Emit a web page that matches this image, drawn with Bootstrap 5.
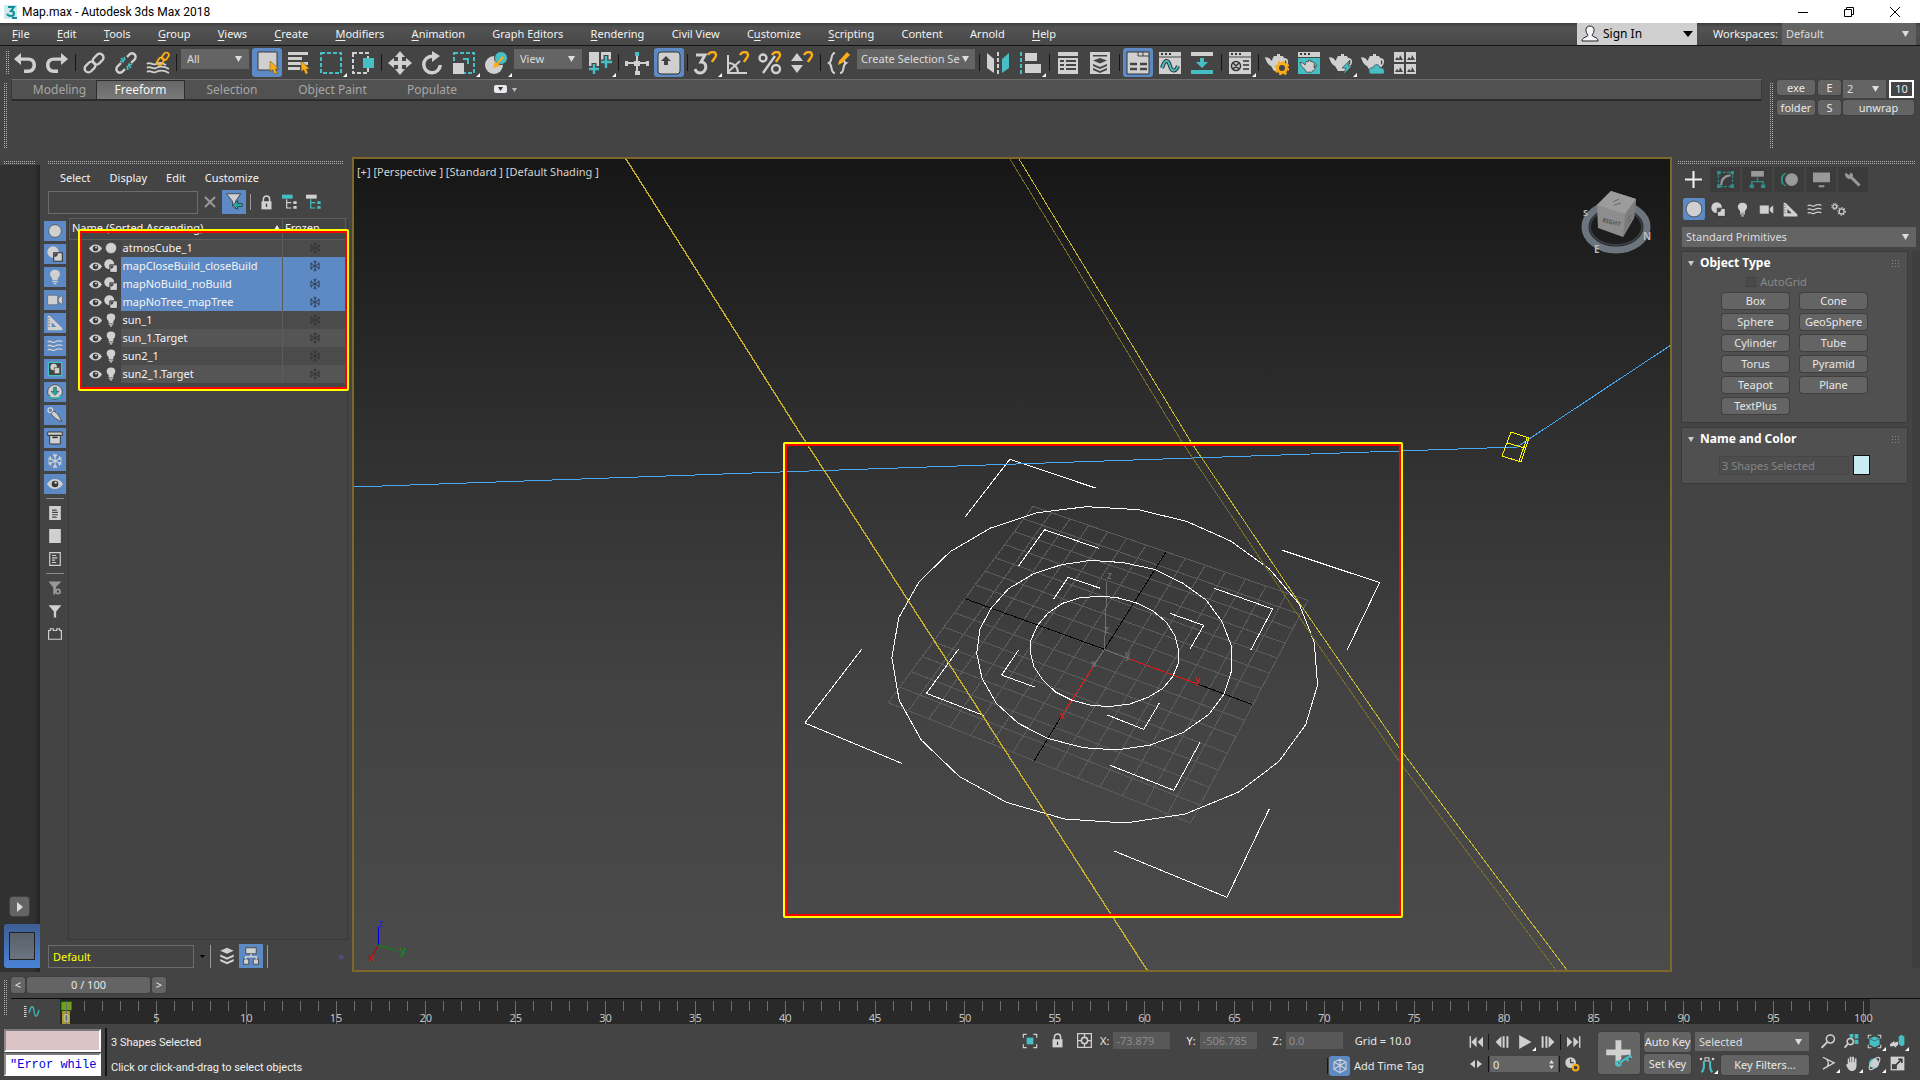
<!DOCTYPE html>
<html lang="en">
<head>
<meta charset="utf-8">
<meta name="viewport" content="width=device-width, initial-scale=1">
<title>Map.max - Autodesk 3ds Max 2018</title>
<link rel="stylesheet" href="https://cdn.jsdelivr.net/npm/bootstrap@5.3.0/dist/css/bootstrap.min.css">
<style>
:root{--bg:#444;--ctl:#646464;--sel:#5d8ac4;--ico:#d0d0d0;--teal:#46bfc4;--gold:#fbae17;
--caret:url("data:image/svg+xml,%3Csvg xmlns='http://www.w3.org/2000/svg' width='7' height='6'%3E%3Cpath d='M0 0h7L3.5 6z' fill='%23ddd'/%3E%3C/svg%3E")}
body{background:var(--bg);color:#e8e8e8;font-family:"Noto Sans","Open Sans",sans-serif;font-size:11px;line-height:14px;height:100vh;overflow:hidden}
button,select,input{font:inherit;color:inherit;border:0;border-radius:0;padding:0;margin:0;outline:0}
button{background:none;display:inline-flex;align-items:center;justify-content:center}
a{color:inherit;text-decoration:none}
svg{display:block}
.ic{width:24px;height:24px;fill:var(--ico);stroke:none;color:var(--ico)}
.ic-12{width:12px;height:12px}.ic-13{width:13px;height:13px}.ic-14{width:14px;height:14px}.ic-15{width:15px;height:15px}
.ic-16{width:16px;height:16px}.ic-17{width:17px;height:17px}.ic-18{width:18px;height:18px}.ic-20{width:20px;height:20px}.ic-28{width:28px;height:28px}
.titlebar{height:23px;background:#fff;color:#000;font-family:Roboto,"Open Sans",sans-serif;font-size:12px}
.winbtn{width:46px;height:23px}
.winset{margin-right:2px}
.menubar{height:23px;background:linear-gradient(#3e3e3e,#525252 20%,#484848);border-bottom:1px solid #141414;color:#f2f2f2}
.menus{width:1068px}
.menus a{padding:0 12px;white-space:nowrap}
.menus u{text-underline-offset:2px}
.signin{width:120px;height:22px;background:#cfcfcf;color:#000;font-size:12px;margin-right:16px}
.pick{appearance:none;background:var(--ctl) var(--caret) no-repeat right 7px center;color:#ddd;text-overflow:clip;white-space:nowrap;overflow:hidden}
.pick.ws{width:134px;height:22px;padding-left:4px}
.toolbar-main{height:33px;padding-left:2px}
.grip-v,.grip-h{background:repeating-linear-gradient(0deg,var(--bg) 0 1px,transparent 1px 2px),repeating-linear-gradient(90deg,#b0b0b0 0 1px,transparent 1px 2px)}
.grip-v{width:3px}
.grip-h{height:4px}
.tool{width:32px;height:31px;position:relative}
.tool.on>span{width:30px;height:29px;background:var(--sel);border-radius:3px;display:flex;align-items:center;justify-content:center}
.fly::after{content:"";position:absolute;right:0;bottom:1px;border:2px solid transparent;border-right-color:#fff;border-bottom-color:#fff}
.tsep{width:5px;display:flex;justify-content:center}
.tsep::before{content:"";width:1px;height:17px;background:#161616}
.tsep.wide{width:6px}
.toolbar-main .pick{width:68px;height:20px;margin:0 2px 8px;padding:0 6px}
.toolbar-main .pick.named{width:118px;padding-left:4px;background-position:right 6px center}
.ribbon{height:78px}
.ribtabs{height:22px;background:#515151;border:1px solid #3a3a3a;border-top-color:#6c6c6c;border-bottom:2px solid #2c2c2c;color:#a6a6a6;font-size:12px}
.ribtabs button{height:19px}
.rt1{width:84px;padding-left:11px}.rt2{width:89px;background:linear-gradient(#666,#7a7a7a);color:#f4f4f4;border:1px solid #2c2c2c;border-bottom:0}
.rt3{width:94px}.rt4{width:107px}.rt5{width:92px}
.flat{background:var(--ctl);border-radius:3px;color:#e8e8e8;box-shadow:0 0 0 1px #3f3f3f}
.quick{width:158px}
.quick .flat{height:15px}
.q-a .flat{width:38px}.q-b .flat{width:23px}
.q-a{margin-right:3px}.q-b{margin-right:2px}
.q-a,.q-b{row-gap:5px;padding-top:1px}.q-c{row-gap:2px;padding-right:6px;padding-top:1px}
.q-c .pick{width:43px;height:18px}
.q-ten{width:25px;height:18px}
.leftstrip{width:40px}
.leftdark{background:linear-gradient(90deg,#313131 85%,#232323)}
.playbtn{width:19px;height:19px;margin-left:10px}
.thumbtab{height:44px;background:linear-gradient(#3d5e94,#4a84d8);border-radius:3px 0 0 3px}
.thumbtab i{width:26px;height:28px;background:linear-gradient(#596069,#6a7480);border:1px solid #222}
.explorer{width:312px}
.exmenu{height:25px;color:#f4f4f4;column-gap:19px;padding-left:20px}
.field{background:#444;border:1px solid #6c6c6c;height:23px}
.f-find{width:150px}
.f-layer{width:146px;color:#ff0;margin-left:8px}
.sq{width:24px;height:24px}
.lit-bg{background:var(--sel)}
.drop{width:16px;height:23px}
.togcol{width:28px;padding:3px 0 0 4px;row-gap:3px}
.togcol button{width:22px;height:20px}
.togcol .lit{background:var(--sel)}
.togcol hr{width:18px;margin:1px 2px;border:0;border-top:1px solid #8a8a8a;opacity:1;height:0}
.listbox{border:1px solid #393939;border-top-color:#5c5c5c;width:280px;position:relative}
.tree{table-layout:fixed;width:277px;border-collapse:collapse;color:#f4f4f4}
.c-ico{width:51px}.c-name{width:162px}
.tree th{height:20px;padding:0 2px 2px;font-weight:400;border:1px solid #5c5c5c;border-top:0;overflow:hidden;white-space:nowrap}
.tree td{height:18px;padding:0 0 0 2px;white-space:nowrap}
.tree td+td{background:#4d4d4d}
.tree tr:nth-child(odd) td+td{background:#4b4b4b}
.tree tr:nth-child(even) td+td{background:#555}
.tree tr.picked td+td{background:var(--sel)}
.tree td:last-child{border-left:1px solid #5c5c5c}
.frz{color:#333}.picked .frz{color:#2c3c55}
.pair{gap:2px;padding-right:3px}
.callout{position:absolute;left:9px;top:10px;width:271px;height:162px;border:2px solid #ff0;border-radius:2px;box-shadow:inset 0 0 0 2px #f00;pointer-events:none}
.tallbar{width:1px;height:23px;background:#999}
.more{color:#5656a8}
.vp{border:2px solid #7d672a;background:linear-gradient(#161616,#2e2e2e 32%,#424242 65%,#4b4b4b)}
.vplabel{position:absolute;left:3px;top:6px;color:#d4d4d4}
.cmd{width:248px;padding-left:6px}
.cmdtabs{height:28px;padding-top:2px}
.cmdtabs button{width:30px;height:25px;background:#3b3b3b;margin-right:2px}
.cmdtabs .cur{background:var(--bg)}
.cats{padding:4px 0 6px 4px}
.cats button{width:24px;height:24px}
.cats .lit>span{width:22px;height:22px;background:var(--sel);border-radius:2px}
.p-cat{height:20px}
.rollout{background:#505050;border:1px solid #3a3a3a;border-radius:2px;margin-right:4px;margin-left:3px}
.rollout h2{font-size:12px;line-height:16px;font-weight:700;color:#fff;margin:0}
.rollhead{padding:3px 8px 0 6px;column-gap:6px}
.autogrid{color:#8a8a8a;padding-right:36px}
.autogrid input{appearance:none;width:10px;height:10px;border:1px solid #424242;background:#4a4a4a}
.objname{width:130px;height:19px;background:#4d4d4d;border:1px solid #464646;color:#858585;padding-left:2px}
.swatch{width:17px;height:20px;background:#c8ecf2;border:1px solid #111}
.prims{grid-template-columns:67px 67px;gap:5px 11px;display:grid;justify-content:center}
.prims button{height:16px}
.scrollrail{width:8px;background:#3e3e3e}
.trackwrap{height:52px}
.slider{height:26px;gap:2px}
.slider .flat{width:14px;height:16px}
.slider .flat.s-mid{width:123px}
.trackbar{height:26px;border-top:1px solid #0c0c0c}
.curvebtn{width:49px;height:25px;padding-right:6px}
.track{background:#292929;margin-right:50px;padding:2px 6px 0;height:25px}
.tk{width:1px;height:10px;background:#6d6d6d;display:flex;justify-content:center;align-items:flex-end}
.tk.maj{height:23px}
.tk b{font-weight:400;font-size:11px;line-height:13px;color:#c4c4c4;flex:none}
.head{position:absolute;left:0;top:2px;width:12px}
.status{height:56px}
.script{width:97px;row-gap:1px;padding-top:5px}
.script input{width:97px;height:23px;background:#fff;border:2px solid #fff;border-top-color:#7a7a7a;border-left-color:#8a8a8a;font:400 12px "Liberation Mono",monospace;color:#0000d8;padding-left:4px}
.script .rec{background:#dcc3c5}
.bar2{width:2px;background:#161616}
.prompt{font-family:Roboto,"Noto Sans",sans-serif;padding-top:6px;color:#f0f0f0}
.coords{width:442px}
.tagrow{padding-left:304px}
.tagbtn{width:21px;height:20px;border-radius:3px}
.coord{width:57px;height:17px;background:#585858;color:#8c8c8c;padding-left:3px}
.play{width:134px;row-gap:2px}
.pb{width:23px;height:20px;position:relative}
.frame{width:68px;height:16px;background:var(--ctl);padding-left:3px}
.vs{width:1px;height:16px;background:#161616;margin:0 1px}
.vs.light{background:#999}
.bigkey{width:42px;height:42px}
.keys{row-gap:2px}
.keys .flat{width:47px;height:20px}
.keyset{width:114px;row-gap:4px}
.keyset .pick{height:19px}
.keyset .flat{width:88px;height:20px}
.navgrid{display:grid;grid-template-columns:repeat(4,23px);padding-top:6px;margin-right:11px}
.navgrid button{height:22px;position:relative}
</style>
<script src="https://cdn.jsdelivr.net/npm/bootstrap@5.3.0/dist/js/bootstrap.bundle.min.js"></script>
</head>
<body class="d-flex flex-column">
<svg width="0" height="0" class="position-absolute" aria-hidden="true">
<defs>
<symbol id="undo" viewBox="0 0 24 24"><path d="M1 8l7-6v4.500h7c5 0 8 3 8 7.500s-3 8-8 8h-4v-3.500h4c3 0 4.500-2 4.500-4.500S18 9.800 15 9.800H8V14z"/></symbol>
<symbol id="link" viewBox="0 0 24 24"><g fill="none" stroke="currentColor" stroke-width="2.4"><rect x="-3.6" y="-6" width="7.6" height="12" rx="3.8" transform="translate(16 8) rotate(45)"/><rect x="-3.8" y="-6" width="7.6" height="12" rx="3.8" transform="translate(8 16) rotate(45)"/></g></symbol>
<symbol id="unlink" viewBox="0 0 24 24"><g fill="none" stroke="currentColor" stroke-width="2.4"><path d="M13 6l3-3c3-2 7 1 5 5l-4 4M11 18l-3 3c-3 2-7-1-5-5l4-4"/></g><path d="M7 7l3 3M17 17l-3-3M6 10l4 1M14 13l4 1M10 6l1 3M13 15l1 4" stroke="#46bfc4" stroke-width="1.7"/></symbol>
<symbol id="bind" viewBox="0 0 24 24"><path d="M1 13c3-3 5 2 9 0s6-1 10 1M1 17c3-3 5 2 9 0s8-2 13 1M1 21c3-3 5 2 9 0s8-2 13 1" fill="none" stroke="currentColor" stroke-width="1.8"/><g fill="none" stroke="#fbae17" stroke-width="1.8"><rect x="17" y="1" width="5" height="8" rx="2.5" transform="rotate(35 19 5)"/><rect x="12" y="6" width="5" height="8" rx="2.5" transform="rotate(35 14 10)"/></g></symbol>
<symbol id="arrow" viewBox="0 0 12 16"><path d="M1 0v12l3-2 2 5 3-1-2-5h4z" fill="#fbae17" stroke="#5c4a20" stroke-width=".6"/></symbol>
<symbol id="selobj" viewBox="0 0 24 24"><path d="M3 1h19v18H3z" stroke="#3a3a3a"/><use href="#arrow" x="14" y="10" width="11" height="14"/></symbol>
<symbol id="selname" viewBox="0 0 24 24"><path d="M1 1h20v3H1zM1 6h14v3H1zM1 11h20v3H1zM1 16h12v3H1z"/><use href="#arrow" x="13" y="10" width="11" height="14"/></symbol>
<symbol id="rectsel" viewBox="0 0 24 24"><rect x="2" y="2" width="20" height="20" fill="none" stroke="#46bfc4" stroke-width="2" stroke-dasharray="4 2"/></symbol>
<symbol id="winsel" viewBox="0 0 24 24"><rect x="2" y="2" width="15" height="20" fill="none" stroke="currentColor" stroke-width="2" stroke-dasharray="4 2"/><path d="M12 7h11v10H12z" fill="#46bfc4"/></symbol>
<symbol id="move" viewBox="0 0 24 24"><path d="M12 0l5 6h-3v4h4V7l6 5-6 5v-3h-4v4h3l-5 6-5-6h3v-4H6v3l-6-5 6-5v3h4V6H7z"/></symbol>
<symbol id="rotate" viewBox="0 0 24 24"><path d="M12 0l8 5-8 6V7a6.500 6.500 0 1 0 6.500 7h3.500A10 10 0 1 1 12 3.500z"/></symbol>
<symbol id="scale" viewBox="0 0 24 24"><rect x="2" y="2" width="20" height="20" fill="none" stroke="#46bfc4" stroke-width="2" stroke-dasharray="4 2"/><path d="M1 12h11v11H1z"/><path d="M11 7h6v6h-2V9h-4z" fill="#46bfc4"/></symbol>
<symbol id="place" viewBox="0 0 24 24"><circle cx="10" cy="14" r="9"/><circle cx="17" cy="7" r="6.500" fill="#46bfc4" stroke="#444"/><path d="M18 5l2 2-6 6 2 2-7 2 2-7 2 2z" fill="#fbae17"/></symbol>
<symbol id="pivot" viewBox="0 0 24 24"><path d="M1 1h10v14H1zM13 1h10v9H13z"/><path d="M6 12v12M1 18h10M18 4v14M13 11h11" stroke="#444" stroke-width="5"/><path d="M6 13v10M1 18h10M18 5v12M13 11h11" stroke="#46bfc4" stroke-width="2.4"/></symbol>
<symbol id="manip" viewBox="0 0 24 24"><path d="M12 5v18M1 12h22" stroke="currentColor" stroke-width="2"/><path d="M10 1h4v4h-4z" fill="#46bfc4"/><path d="M0 10h3v5H0zM21 10h3v5h-3zM10 20h5v4h-5zM9 10h6v5H9z"/></symbol>
<symbol id="kbd" viewBox="0 0 24 24"><rect x="1" y="1" width="22" height="22" rx="3" stroke="#333"/><path d="M9 5l5 5h-3v4H7v-4H4z" fill="#444"/></symbol>
<symbol id="magnet" viewBox="0 0 12 12"><path d="M2 4c2-4 8-4 8 0 0 3-3 4-4 7" fill="none" stroke="#fbae17" stroke-width="2.4"/></symbol>
<symbol id="snap3" viewBox="0 0 24 24"><path d="M2 4h9l-4 7c7 0 6 11-1 11-3 0-4-1-5-4" fill="none" stroke="currentColor" stroke-width="3"/><use href="#magnet" x="12" y="0" width="12" height="12"/></symbol>
<symbol id="asnap" viewBox="0 0 24 24"><path d="M2 4v18h19M2 12c6 0 10 4 10 10M2 21L14 10" fill="none" stroke="currentColor" stroke-width="2"/><use href="#magnet" x="12" y="0" width="12" height="12"/></symbol>
<symbol id="psnap" viewBox="0 0 24 24"><g fill="none" stroke="currentColor" stroke-width="2.4"><circle cx="5" cy="7" r="3.500"/><circle cx="18" cy="18" r="4"/><path d="M5 22L17 5"/></g><use href="#magnet" x="12" y="0" width="12" height="12"/></symbol>
<symbol id="ssnap" viewBox="0 0 24 24"><path d="M1 10l6-8 6 8zM1 14h12l-6 8z"/><use href="#magnet" x="12" y="0" width="12" height="12"/></symbol>
<symbol id="nset" viewBox="0 0 24 24"><path d="M8 2C3 2 6 10 2 12c4 2 1 10 6 10M13 22c5 0 2-8 6-10-3-1-2-3-2-5" fill="none" stroke="currentColor" stroke-width="2"/><path d="M11 14l1-4 8-9 3 3-8 8z" fill="#fbae17"/></symbol>
<symbol id="mirror" viewBox="0 0 24 24"><path d="M1 2l7 6v14l-7-5z"/><path d="M12 1v22" stroke="currentColor" stroke-width="2" stroke-dasharray="4 2"/><path d="M23 2l-7 6v14l7-5z" fill="#46bfc4"/></symbol>
<symbol id="align" viewBox="0 0 24 24"><path d="M3 1v22" stroke="#46bfc4" stroke-width="2" stroke-dasharray="4 2"/><path d="M7 2h12v8H7zM7 13h16v9H7z"/></symbol>
<symbol id="layers" viewBox="0 0 24 24"><path d="M2 1h20v22H2z"/><path d="M2 6h20M4 10h4M10 10h10M4 14h4M10 14h10M4 18h4M10 18h10" stroke="#444" stroke-width="2"/></symbol>
<symbol id="stackp" viewBox="0 0 24 24"><path d="M2 1h20v22H2z"/><path d="M5 4h14v1.500H5zM5 9.500L12 7l7 2.500-7 3zM5 13l7 3 7-3v2l-7 3-7-3zM5 17l7 3 7-3v2l-7 3-7-3z" fill="#444"/></symbol>
<symbol id="ribb" viewBox="0 0 24 24"><path d="M1 1h22v22H1z" stroke="#333"/><path d="M12 1v4h11M17 1v4" stroke="#444" fill="none"/><path d="M4 13h7M14 13h7M4 18h7M14 18h7" stroke="#444" stroke-width="2.6"/></symbol>
<symbol id="curve" viewBox="0 0 24 24"><path d="M1 1h22v22H1z"/><path d="M1 6h22" stroke="#444"/><path d="M3 3h2M7 3h2M11 3h2" stroke="#333" stroke-width="2"/><path d="M4 17c3-9 6-9 8-2s6 5 8 0" fill="none" stroke="#333" stroke-width="4"/><path d="M4 17c3-9 6-9 8-2s6 5 8 0" fill="none" stroke="#46bfc4" stroke-width="2"/></symbol>
<symbol id="schem" viewBox="0 0 24 24"><path d="M1 1h22v4H1z"/><path d="M1 19h22v4H1zM10 7h4v4h4l-6 6-6-6h4z" fill="#46bfc4"/></symbol>
<symbol id="mated" viewBox="0 0 24 24"><path d="M1 1h22v22H1z"/><path d="M1 6h22" stroke="#444"/><path d="M3 3h2M7 3h2M11 3h2" stroke="#333" stroke-width="2"/><circle cx="8" cy="15" r="4.500" fill="none" stroke="#333" stroke-width="1.500"/><path d="M5 12l6 6M11 12l-6 6M15 10h6M15 14h6M15 18h6" stroke="#333" stroke-width="1.500"/></symbol>
<symbol id="pot" viewBox="0 0 24 24"><path d="M9 5h3V3h3v2h3l1 2c6 0 5 7 0 10l-2 3H9L6 15C3 14 1 10 0 6l4 1 3 3c0-2 1-3 2-5zM20 9v5c2-2 2-4 0-5z"/></symbol>
<symbol id="rset" viewBox="0 0 24 24"><use href="#pot"/><circle cx="17" cy="17" r="4.500" fill="#444" stroke="#fbae17" stroke-width="3"/><circle cx="17" cy="17" r="6.500" fill="none" stroke="#fbae17" stroke-width="2" stroke-dasharray="2.500 2.600"/></symbol>
<symbol id="rframe" viewBox="0 0 24 24"><path d="M1 1h22v5H1z"/><path d="M3 3h2M7 3h2M11 3h2" stroke="#333" stroke-width="2"/><path d="M1 7h22v16H1z" fill="#46bfc4"/><use href="#pot" x="2" y="7" width="19" height="17" stroke="#333"/></symbol>
<symbol id="rprod" viewBox="0 0 24 24"><use href="#pot"/><path d="M21 9l-8 8h4l-3 7 9-9h-4z" fill="#46bfc4" stroke="#444" stroke-width=".7"/></symbol>
<symbol id="rcloud" viewBox="0 0 24 24"><use href="#pot"/><path d="M9 23c-3-5 1-7 3-6 1-5 7-4 7 0 4-1 5 3 4 6z" fill="#46bfc4" stroke="#444" stroke-width=".7"/></symbol>
<symbol id="gallery" viewBox="0 0 24 24"><path d="M1 1h10v10H1zM13 1h10v10H13zM1 13h10v10H1zM13 13h10v10H13z"/><path d="M2 9l2-3 2 2 1-4 3 5zM14 9l2-3 2 2 1-4 3 5zM2 21l2-3 2 2 1-4 3 5zM14 21l2-3 2 2 1-4 3 5z" fill="#444"/></symbol>
<symbol id="geo" viewBox="0 0 24 24"><circle cx="12" cy="12" r="9.500" stroke="#444"/></symbol>
<symbol id="shape" viewBox="0 0 24 24"><circle cx="9" cy="9" r="8.500"/><path d="M10 10h13v13H10z" stroke="#333" stroke-width="1.600"/><path d="M11 16.500c4 0 5.500-3 5.500-5.500H11z" fill="#444"/></symbol>
<symbol id="bulb" viewBox="0 0 24 24"><path d="M12 1c9 0 9 9 4 13v3H8v-3C3 10 3 1 12 1zM8 18h8v2H8zM10 21h4v2h-4z"/></symbol>
<symbol id="cam" viewBox="0 0 24 24"><path d="M1 5h15v14H1zM17 10l4-4h2v12h-2l-4-4z" stroke="#444" stroke-width=".7"/></symbol>
<symbol id="helper" viewBox="0 0 24 24"><path d="M1 1h3l19 19v3H1zM7 11v7h7z" fill-rule="evenodd"/><path d="M2 5h2M2 9h2M2 13h2M2 17h2" stroke="#333"/></symbol>
<symbol id="waves" viewBox="0 0 24 24"><path d="M1 6c5-4 6 3 11 0s6-2 11-1M1 12c5-4 6 3 11 0s6-2 11-1M1 18c5-4 6 3 11 0s6-2 11-1" fill="none" stroke="currentColor" stroke-width="2"/></symbol>
<symbol id="group" viewBox="0 0 24 24"><path d="M2 2h20v20H2z" fill="#444" stroke="#46bfc4" stroke-width="2"/><circle cx="10" cy="9" r="5"/><path d="M11 10h8v9h-8z" stroke="#444"/></symbol>
<symbol id="xref" viewBox="0 0 24 24"><circle cx="12" cy="12" r="11" stroke="#333"/><path d="M10 5h4v6h4l-6 6-6-6h4z" fill="#25a9a4" stroke="#333" stroke-width=".8"/><path d="M4 16v5h16v-5" fill="none" stroke="#25a9a4" stroke-width="2.400"/></symbol>
<symbol id="bone" viewBox="0 0 24 24"><circle cx="5" cy="5" r="3.600" fill="none" stroke="currentColor" stroke-width="2"/><path d="M6 10l4-4c5 2 9 9 12 16-7-3-13-7-16-12z" stroke="#333"/></symbol>
<symbol id="boxi" viewBox="0 0 24 24"><path d="M1 3h22v5H1zM4 8h16v13H4z" stroke="#333" stroke-width="1.400"/><path d="M8 11h8" stroke="#333" stroke-width="2.400"/></symbol>
<symbol id="snow" viewBox="0 0 24 24"><path d="M12 1v22M2 7l20 10M22 7L2 17M9 2l3 4 3-4M9 22l3-4 3 4M2 11l4-2-1-4M22 13l-4 2 1 4M2 13l4 2-1 4M22 11l-4-2 1-4" fill="none" stroke="currentColor" stroke-width="1.800"/></symbol>
<symbol id="eye" viewBox="0 0 24 24"><path d="M0 12c6-10 18-10 24 0-6 10-18 10-24 0z"/><circle cx="12" cy="12" r="5" fill="#383838"/><circle cx="13" cy="10" r="1.800"/></symbol>
<symbol id="doc1" viewBox="0 0 24 24"><path d="M2 0h20v24H2z"/><path d="M7 7h8M7 11h10M7 15h10M7 19h8" stroke="#444" stroke-width="2"/></symbol>
<symbol id="doc2" viewBox="0 0 24 24"><path d="M2 0h20v24H2z"/></symbol>
<symbol id="doc3" viewBox="0 0 24 24"><path d="M3 1h18v22H3z" fill="none" stroke="currentColor" stroke-width="2"/><path d="M7 6h7M7 10h9M7 14h5M7 18h7" stroke="currentColor" stroke-width="2"/></symbol>
<symbol id="funnel" viewBox="0 0 24 24"><path d="M1 2h22l-9 11v10h-4V13z"/></symbol>
<symbol id="funset" viewBox="0 0 24 24"><path d="M1 1h22l-9 9-2 13h-3V11z" fill="#999"/><circle cx="17" cy="18" r="3.600" fill="#444" stroke="#999" stroke-width="3"/></symbol>
<symbol id="bag" viewBox="0 0 24 24"><path d="M1 6h3V3h5v3h6V3h5v3h3v15H1z" fill="none" stroke="currentColor" stroke-width="2"/></symbol>
<symbol id="lock" viewBox="0 0 24 24"><path d="M7 11V7c0-7 10-7 10 0v4" fill="none" stroke="currentColor" stroke-width="2.400"/><path d="M4 10h16v13H4z"/><path d="M11 14h2v5h-2z" fill="#333"/></symbol>
<symbol id="tree1" viewBox="0 0 24 24"><path d="M0 1h16v6H0z" fill="#46bfc4"/><path d="M7 8v13h7M7 13h7" fill="none" stroke="currentColor" stroke-width="1.800"/><path d="M17 11h5v4h-5zM17 18h5v4h-5z"/></symbol>
<symbol id="tree2" viewBox="0 0 24 24"><path d="M0 1h16v6H0z"/><g fill="none" stroke="#46bfc4" stroke-width="1.800"><path d="M7 8v13h7M7 13h7"/></g><path d="M17 11h5v4h-5zM17 18h5v4h-5z" fill="#46bfc4"/></symbol>
<symbol id="filt" viewBox="0 0 24 24"><path d="M2 1h19l-7 10v10l-4-3v-7z" stroke="#333"/><path d="M23 14h-6v-4l-7 6 7 6v-4h6z" fill="#25a9a4" stroke="#333"/></symbol>
<symbol id="stack" viewBox="0 0 24 24"><path d="M3 5l9-4 9 4-9 4zM3 10l9 4 9-4v3l-9 4-9-4zM3 16l9 4 9-4v3l-9 4-9-4z"/></symbol>
<symbol id="hier" viewBox="0 0 24 24"><path d="M5 1h14v8H5zM2 16h7v7H2zM15 16h7v7h-7z" stroke="#333"/><path d="M12 9v4M5 16v-3h14v3" fill="none" stroke="currentColor" stroke-width="2"/></symbol>
<symbol id="plus" viewBox="0 0 24 24"><path d="M12 0v24M0 12h24" stroke="#eee" stroke-width="3"/></symbol>
<symbol id="modify" viewBox="0 0 24 24"><path d="M2 2h20v20H2z" fill="none" stroke="#2f8f89" stroke-width="1.600" stroke-dasharray="4 2"/><path d="M0 0h5v5H0zM19 0h5v5h-5zM0 19h5v5H0zM19 19h5v5h-5z" fill="#2f8f89"/><path d="M6 20c0-9 4-13 13-14" fill="none" stroke="#999" stroke-width="3"/></symbol>
<symbol id="hier2" viewBox="0 0 24 24"><path d="M3 0h18v8H3z" fill="#999"/><path d="M12 9v6M4 19v-4h16v4" fill="none" stroke="#2f8f89" stroke-width="2"/><path d="M1 19h6v5H1zM17 19h6v5h-6z" fill="#2f8f89"/></symbol>
<symbol id="motion" viewBox="0 0 24 24"><circle cx="15" cy="12" r="9" fill="#999"/><path d="M7 3c-7 3-7 15 0 18M3 5c-4 4-4 10 0 14" fill="none" stroke="#2f8f89" stroke-width="1.600"/></symbol>
<symbol id="disp" viewBox="0 0 24 24"><path d="M0 2h24v14H0zM8 20h8v3H8z" fill="#999"/></symbol>
<symbol id="wrench" viewBox="0 0 24 24"><path d="M1 2l5 4 2-4c3 1 4 4 3 6l11 11-3 3L8 11C5 12 1 10 0 6z" fill="#999"/></symbol>
<symbol id="gears" viewBox="0 0 24 24"><g fill="none" stroke="currentColor"><circle cx="6" cy="7" r="3" stroke-width="2"/><circle cx="6" cy="7" r="5" stroke-width="1.600" stroke-dasharray="2 2"/><circle cx="17" cy="15" r="4" stroke-width="2"/><circle cx="17" cy="15" r="6" stroke-width="1.800" stroke-dasharray="2 2.500"/></g></symbol>
<symbol id="isol" viewBox="0 0 24 24"><path d="M2 7V2h5M17 2h5v5M22 17v5h-5M7 22H2v-5" fill="none" stroke="currentColor" stroke-width="1.800"/><path d="M7 7h10v10H7z" fill="#46bfc4"/></symbol>
<symbol id="absrel" viewBox="0 0 24 24"><path d="M1 1h22v22H1z" fill="none" stroke="currentColor" stroke-width="2"/><circle cx="12" cy="12" r="5" fill="none" stroke="currentColor" stroke-width="2.500"/><path d="M12 1v6M12 17v6M1 12h6M17 12h6" stroke="currentColor" stroke-width="2"/></symbol>
<symbol id="cubei" viewBox="0 0 24 24"><path d="M12 2l9 4v11l-9 5-9-5V6zM3 6l9 5 9-5M12 11v11M12 2v9M3 17l9-6 9 6" fill="none" stroke="currentColor" stroke-width="1.700"/></symbol>
<symbol id="p-start" viewBox="0 0 24 24"><path d="M1 2h2.500v20H1zM13 3v18l-9-9zM24 3v18l-9-9z"/></symbol>
<symbol id="p-prev" viewBox="0 0 24 24"><path d="M11 2v20L1 12zM13 2h3.500v20H13zM19.500 2H23v20h-3.500z"/></symbol>
<symbol id="p-play" viewBox="0 0 24 24"><path d="M2 0l21 12L2 24z"/></symbol>
<symbol id="p-next" viewBox="0 0 24 24"><path d="M13 2v20l10-10zM7.500 2H11v20H7.500zM1 2h3.500v20H1z"/></symbol>
<symbol id="p-end" viewBox="0 0 24 24"><path d="M20.500 2H23v20h-2.500zM11 3v18l9-9zM0 3v18l9-9z"/></symbol>
<symbol id="key" viewBox="0 0 24 24"><path d="M9 1h5v8h8v5h-8v8H9v-8H1V9h8z"/><path d="M12 22l9-7" stroke="#646464" stroke-width="5"/><path d="M13 20l9-6M18 16l2 3M21 14l2 2" stroke="#46bfc4" stroke-width="1.800"/><circle cx="11.500" cy="21" r="2" fill="none" stroke="#46bfc4" stroke-width="1.600"/></symbol>
<symbol id="clock" viewBox="0 0 24 24"><circle cx="9" cy="9" r="8.500"/><path d="M9 3v6h5" stroke="#444" stroke-width="2" fill="none"/><circle cx="17" cy="17" r="4.600" fill="#444" stroke="#fbae17" stroke-width="3"/></symbol>
<symbol id="tang" viewBox="0 0 24 24"><path d="M4 23c4-4 4-10 3-17M20 23c-4-4-4-10-3-17" fill="none" stroke="#46bfc4" stroke-width="3"/><circle cx="3" cy="3" r="2"/><circle cx="21" cy="3" r="2"/><path d="M9 1h6v5H9z" fill="none" stroke="currentColor" stroke-width="1.600"/></symbol>
<symbol id="zoom1" viewBox="0 0 24 24"><circle cx="15" cy="8" r="6.500" fill="none" stroke="currentColor" stroke-width="2.400"/><path d="M10 13l-9 9" stroke="currentColor" stroke-width="3"/></symbol>
<symbol id="zoomall" viewBox="0 0 24 24"><path d="M9 0h6v6H9zM17 0h6v7h-6zM17 9h6v7h-6z" fill="#46bfc4"/><circle cx="10" cy="12" r="5" fill="#444" stroke="currentColor" stroke-width="2.400"/><path d="M6 16l-5 6" stroke="currentColor" stroke-width="3"/></symbol>
<symbol id="zext" viewBox="0 0 24 24"><path d="M2 7V2h5M17 2h5v5M22 17v5h-5M7 22H2v-5" fill="none" stroke="currentColor" stroke-width="1.800"/><path d="M12 4l8 3v10l-8 4-8-4V7z" fill="#46bfc4"/><path d="M5 8l7 3 7-3" stroke="#444" fill="none"/></symbol>
<symbol id="zreg" viewBox="0 0 24 24"><path d="M14 4l4-3 5 3v13l-4 3-5-4z" fill="#46bfc4"/><path d="M0 16l7-5v3l6-2v5l-5 5-1-3-7 1z"/></symbol>
<symbol id="fov" viewBox="0 0 24 24"><path d="M3 2l18 9L3 21M9 5c4 5 3 10-1 14" fill="none" stroke="currentColor" stroke-width="2.200"/></symbol>
<symbol id="hand" viewBox="0 0 24 24"><path d="M6 12V4h2v6h1V1h3v9h1V1h3v9h1V4h3v12c0 5-3 8-7 8-5 0-7-4-10-10l2-1z"/></symbol>
<symbol id="orbit" viewBox="0 0 24 24"><circle cx="11" cy="12" r="8" fill="#46bfc4"/><path d="M11 4a8 8 0 0 1 5 14L5 17z"/><ellipse cx="12" cy="12" rx="12" ry="5" fill="none" stroke="currentColor" stroke-width="2" transform="rotate(-50 12 12)"/></symbol>
<symbol id="maxi" viewBox="0 0 24 24"><path d="M1 1h22v22H1z"/><path d="M3 13h8v8H3z" fill="#444"/><path d="M10 14l9-9M13 5h6v6" stroke="#333" stroke-width="2.400" fill="none"/></symbol>
<symbol id="dots" viewBox="0 0 7 7"><path fill="#888" d="M0 0h1v1H0zM3 0h1v1H3zM6 0h1v1H6zM0 3h1v1H0zM3 3h1v1H3zM6 3h1v1H6zM0 6h1v1H0zM3 6h1v1H3zM6 6h1v1H6z"/></symbol>
</defs>
</svg>

<header class="titlebar d-flex align-items-center ps-1 flex-shrink-0">
  <svg width="14" height="16" viewBox="0 0 14 16"><path d="M0 1h13v14H0z" fill="#cfe9ec"/><path d="M4 3h6L7 7c4 0 4 5 0 5-2 0-3 0-4-2" fill="none" stroke="#0f8f99" stroke-width="2"/><path d="M8 14h5" stroke="#0f8f99" stroke-width="2"/></svg>
  <span class="ms-1">Map.max - Autodesk 3ds Max 2018</span>
  <div class="winset ms-auto d-flex">
    <button class="winbtn" aria-label="Minimize"><svg width="10" height="10"><path d="M0 5.500h10" stroke="#000"/></svg></button>
    <button class="winbtn" aria-label="Restore"><svg width="10" height="10"><path d="M.5 2.500h7v7h-7zM2.500 2.500v-2h7v7h-2" fill="none" stroke="#000"/></svg></button>
    <button class="winbtn" aria-label="Close"><svg width="10" height="10"><path d="M0 0l10 10M10 0L0 10" stroke="#000"/></svg></button>
  </div>
</header>

<nav class="menubar d-flex align-items-center flex-shrink-0">
  <div class="menus d-flex justify-content-between">
    <a href="#"><u>F</u>ile</a><a href="#"><u>E</u>dit</a><a href="#"><u>T</u>ools</a><a href="#"><u>G</u>roup</a><a href="#"><u>V</u>iews</a><a href="#"><u>C</u>reate</a><a href="#"><u>M</u>odifiers</a><a href="#"><u>A</u>nimation</a><a href="#">Graph E<u>d</u>itors</a><a href="#"><u>R</u>endering</a><a href="#">Civil View</a><a href="#">C<u>u</u>stomize</a><a href="#"><u>S</u>cripting</a><a href="#">Content</a><a href="#">Arnold</a><a href="#"><u>H</u>elp</a>
  </div>
  <div class="ms-auto d-flex align-items-center">
    <button class="signin justify-content-start ps-1"><svg width="18" height="18" viewBox="0 0 18 18"><path d="M9 1c5 0 5 6 2 9 0 2 6 2 6 6H1c0-4 6-4 6-6C4 7 4 1 9 1z" fill="#f4f6fa" stroke="#222"/></svg><span class="ms-1">Sign In</span><svg class="ms-auto me-1" width="10" height="6"><path d="M0 0h10L5 6z"/></svg></button>
    <label for="ws" class="me-1 text-nowrap">Workspaces:</label>
    <select id="ws" class="pick ws me-1"><option>Default</option></select>
  </div>
</nav>

<div class="toolbar-main d-flex align-items-center flex-shrink-0" id="tools"><div class="grip-v h-75 ms-1"></div></div>

<div class="ribbon d-flex flex-shrink-0">
  <div class="grip-v mt-1 mb-2 ms-1 me-1 flex-shrink-0"></div>
  <div class="flex-grow-1">
    <div class="ribtabs d-flex align-items-center">
      <button class="rt1">Modeling</button><button class="rt2">Freeform</button><button class="rt3">Selection</button><button class="rt4">Object Paint</button><button class="rt5">Populate</button>
      <button class="ms-3" aria-label="Ribbon display"><svg width="24" height="9"><rect width="13" height="8" rx="2" fill="#e8e8ee"/><path d="M4 2h5L6.500 6z" fill="#333"/><path d="M18 3h5l-2.500 4z" fill="#bbb"/></svg></button>
    </div>
  </div>
  <div class="quick d-flex">
    <div class="grip-v mt-1 mb-2 ms-2 me-1 flex-shrink-0"></div>
    <div class="q-a d-flex flex-column">
      <button class="flat">exe</button><button class="flat">folder</button>
    </div>
    <div class="q-b d-flex flex-column">
      <button class="flat">E</button><button class="flat">S</button>
    </div>
    <div class="q-c d-flex flex-column flex-grow-1">
      <div class="d-flex justify-content-between">
        <select class="pick ps-1" aria-label="Count"><option>2</option></select>
        <button class="q-ten border border-2 border-white">10</button>
      </div>
      <button class="flat w-100">unwrap</button>
    </div>
  </div>
</div>

<main class="d-flex flex-grow-1 overflow-hidden">
  <aside class="leftstrip d-flex flex-column flex-shrink-0">
    <div class="grip-h mx-1 mt-1 flex-shrink-0"></div>
    <div class="leftdark flex-grow-1 d-flex flex-column justify-content-end">
      <button class="playbtn flat mb-2" aria-label="Expand"><svg width="6" height="10"><path d="M0 0l6 5-6 5z" fill="#ddd"/></svg></button>
      <button class="thumbtab ms-1 mb-1" aria-label="Layout 1"><i></i></button>
    </div>
  </aside>

  <section class="explorer d-flex flex-column flex-shrink-0">
    <div class="grip-h ms-2 me-2 mt-1 flex-shrink-0"></div>
    <nav class="exmenu d-flex align-items-center"><a href="#">Select</a><a href="#">Display</a><a href="#">Edit</a><a href="#">Customize</a></nav>
    <div class="d-flex align-items-center ps-2 mb-1">
      <input class="field f-find" aria-label="Find">
      <button class="sq" aria-label="Clear"><svg class="ic-12" viewBox="0 0 12 12"><path d="M1 1l10 10M11 1L1 11" stroke="#999" stroke-width="2"/></svg></button>
      <button class="sq lit-bg" aria-label="Filter"><svg class="ic ic-18"><use href="#filt"/></svg></button>
      <i class="vs light ms-1 me-1"></i>
      <button class="ms-1" aria-label="Lock"><svg class="ic ic-15"><use href="#lock"/></svg></button>
      <button class="ms-2" aria-label="Hierarchy"><svg class="ic ic-16"><use href="#tree1"/></svg></button>
      <button class="ms-2" aria-label="Layer tree"><svg class="ic ic-16"><use href="#tree2"/></svg></button>
    </div>
    <div class="d-flex flex-grow-1">
      <div class="togcol d-flex flex-column" id="tog"></div>
      <div class="listbox">
        <table class="tree">
          <colgroup><col class="c-ico"><col class="c-name"><col></colgroup>
          <thead><tr><th colspan="2"><span class="d-flex justify-content-between align-items-center">Name (Sorted Ascending)<svg width="6" height="5"><path d="M0 5h6L3 0z" fill="#eee"/></svg></span></th><th>Frozen</th></tr></thead>
          <tbody id="rows"></tbody>
        </table>
        <div class="callout"></div>
      </div>
    </div>
    <div class="d-flex align-items-center mt-1 mb-1">
      <input class="field f-layer px-1" value="Default" aria-label="Layer">
      <button class="drop" aria-label="Layer list"><svg width="5" height="3"><path d="M0 0h5L2.500 3z"/></svg></button>
      <i class="tallbar"></i>
      <button class="sq ms-1" aria-label="Layers"><svg class="ic ic-18"><use href="#stack"/></svg></button>
      <button class="sq lit-bg" aria-label="Hierarchy view"><svg class="ic ic-18"><use href="#hier"/></svg></button>
      <i class="tallbar ms-1"></i>
      <span class="more ms-auto me-2">»</span>
    </div>
  </section>

  <section class="vp flex-grow-1 position-relative overflow-hidden">
    <svg width="100%" height="100%" viewBox="354 159 1316 811" preserveAspectRatio="xMidYMid slice" fill="none">
      <g shape-rendering="crispEdges">
      <path id="grid" stroke="#5c5c5c"/>
      <g transform="translate(780 430) scale(.40816 .33333)">
        <path d="M453 506L795 658L945 367M1025 763L1156 823M690 858L623 992" stroke="#000" vector-effect="non-scaling-stroke"/>
        <path d="M795 658L801 455M795 658L858 688M795 658L768 708" stroke="#707070" vector-effect="non-scaling-stroke"/>
        <path d="M858 688L1025 763M768 708L690 858" stroke="#e01818" vector-effect="non-scaling-stroke"/>
        <path stroke="#fff" vector-effect="non-scaling-stroke" d="M751 230L878 239 996 274 1104 333 1199 417 1272 522 1309 637 1317 765 1288 884 1222 995 1122 1087 993 1152 846 1179 697 1167 555 1117 440 1040 346 930 292 811 274 683 291 563 341 455 417 365 516 294 630 248zM762 391L842 398 917 418 986 459 1044 510 1083 575 1106 648 1107 720 1088 792 1050 854 987 908 908 945 825 960 743 953 655 925 584 880 530 820 495 745 482 670 490 597 517 535 560 476 622 431 690 404zM778 499L823 502 872 518 914 543 947 577 968 618 977 665 976 700 962 740 938 775 902 802 857 822 805 830 760 825 716 811 675 786 644 750 622 710 613 665 614 633 631 586 656 550 692 520 733 504zM454 260L563 88 773 174M1231 361L1469 458 1389 661M200 658L61 879 298 1000M819 1263L1095 1402 1199 1136M584 409L648 299 781 355M1064 475L1207 537 1153 661M437 658L359 790 500 857M809 1006L965 1081 1029 937M670 508L706 442 785 475M955 550L1038 586 1004 658M584 661L543 735 626 772M802 855L891 898 930 818"/>
      </g>
      <path d="M354 487L780 472 1517 447 1671 345" stroke="#48a8f0"/>
      <path d="M1019 159L1191 442 1298 601 1400 749 1567 970" stroke="#c8b830"/>
      <path d="M626 159L798 430 1147 970" stroke="#c8b02c" stroke-width="1.400"/>
      <path d="M1010 159L1182 442 1314 639 1404 768 1556 970" stroke="#786c2a"/>
      <path d="M1511 432L1529 438 1521 462 1502 456zM1507 443L1525 448M1527 438L1519 461" stroke="#ff0"/>
      </g>
      <g fill="#777" font-size="10"><text x="1107" y="579">z</text><text x="1104" y="633">z</text><text x="1125" y="658">y</text><text x="1091" y="667">x</text></g>
      <g fill="#e01818" font-size="10"><text x="1195" y="683">y</text><text x="1059" y="719">x</text></g>
      <g><ellipse cx="1616" cy="227" rx="31" ry="23" stroke="#6c747d" stroke-width="7"/><ellipse cx="1616" cy="227" rx="26" ry="18" stroke="#3a3e42" stroke-width="2"/>
        <path d="M1611 191l25 8-2 19-11 19-25-9-1-23z" fill="#8d8d8d"/><path d="M1611 191l25 8-11 15-28-9z" fill="#9c9c9c"/><path d="M1625 214l11-15-2 19-11 19z" fill="#7d7d7d"/>
        <path d="M1613 202l6-3M1614 205l7-2M1627 220l4-5M1628 223l3-4" stroke="#666"/>
        <g font-size="6" font-weight="700"><text x="1602" y="222" fill="#555" transform="rotate(14 1602 222)">RIGHT</text><text x="1583" y="216" font-size="9" fill="#bbb">S</text><text x="1594" y="253" font-size="10" fill="#bbb">E</text><text x="1643" y="240" font-size="10" fill="#bbb">N</text></g></g>
      <g><path d="M378.500 945V927" stroke="#0000e0"/><path d="M378 945l20 6" stroke="#009000"/><path d="M378 945l-6 12" stroke="#c00000"/></g>
      <g font-size="11"><text x="378" y="927" fill="#2020e0">z</text><text x="400" y="954" fill="#00a000">y</text><text x="368" y="961" fill="#e00000">x</text></g>
      <rect x="784" y="443" width="618" height="474" rx="1" stroke="#ff0" stroke-width="2"/><rect x="786" y="445" width="614" height="470" stroke="#f00" stroke-width="2"/>
    </svg>
    <span class="vplabel">[+] [Perspective ] [Standard ] [Default Shading ]</span>
  </section>

  <aside class="cmd d-flex flex-column flex-shrink-0">
    <div class="grip-h mt-1 me-1 flex-shrink-0"></div>
    <div class="cmdtabs d-flex flex-shrink-0" id="ctabs"></div>
    <div class="cats d-flex" id="cats"></div>
    <select class="pick p-cat ms-1 me-1 mb-1 px-1 flex-shrink-0" aria-label="Category"><option>Standard Primitives</option></select>
    <div class="d-flex flex-grow-1 mb-1">
      <div class="flex-grow-1">
        <div class="rollout pb-2 mb-1">
          <div class="rollhead d-flex align-items-center"><svg width="6" height="5"><path d="M0 0h6L3 5z" fill="#ccc"/></svg><h2>Object Type</h2><svg width="7" height="7" class="ms-auto"><use href="#dots"/></svg></div>
          <div class="autogrid d-flex align-items-center justify-content-center my-1 gap-1"><input type="checkbox" id="ag" disabled><label for="ag">AutoGrid</label></div>
          <div class="prims" id="prims"></div>
        </div>
        <div class="rollout pb-2">
          <div class="rollhead d-flex align-items-center"><svg width="6" height="5"><path d="M0 0h6L3 5z" fill="#ccc"/></svg><h2>Name and Color</h2><svg width="7" height="7" class="ms-auto"><use href="#dots"/></svg></div>
          <div class="d-flex align-items-center justify-content-center gap-1 mt-2"><input class="objname" aria-label="Object name" value="3 Shapes Selected" disabled><button class="swatch" aria-label="Object color"></button></div>
        </div>
      </div>
      <div class="scrollrail"></div>
    </div>
  </aside>
</main>

<div class="trackwrap flex-shrink-0 d-flex">
 <div class="grip-v my-2 ms-1 me-1 flex-shrink-0"></div>
 <div class="flex-grow-1">
  <div class="slider d-flex align-items-center">
    <button class="flat">&lt;</button><button class="flat s-mid">0 / 100</button><button class="flat">&gt;</button>
  </div>
  <div class="trackbar d-flex">
    <button class="curvebtn" aria-label="Mini curve editor"><svg width="17" height="12" fill="none"><path d="M1 0v12" stroke="#ccc" stroke-width="3" stroke-dasharray="1 1"/><path d="M5 7c2-7 4-9 5-2s3 7 5-1" stroke="#3fb0b0" stroke-width="1.500"/></svg></button>
    <div class="track flex-grow-1 position-relative"><svg class="head" height="23"><path d="M1 .5h11v9H1z" fill="#6fa01a" stroke="#0a5a0a"/><path d="M2 10h8v13H2z" fill="#a89a2a"/></svg><div class="d-flex justify-content-between position-relative" id="ticks"></div></div>
  </div>
 </div>
</div>

<footer class="status d-flex flex-shrink-0">
  <div class="script d-flex flex-column ms-1"><input class="rec" aria-label="Macro recorder"><input value='"Error while' aria-label="Listener"></div>
  <div class="bar2 ms-1 me-1 my-1"></div>
  <div class="prompt d-flex flex-column justify-content-around"><span>3 Shapes Selected</span><span>Click or click-and-drag to select objects</span></div>
  <div class="coords ms-auto d-flex flex-column pt-2 pb-1 justify-content-between">
    <div class="d-flex align-items-center">
      <button aria-label="Isolate"><svg class="ic ic-16"><use href="#isol"/></svg></button>
      <button class="ms-2 ps-1" aria-label="Lock selection"><svg class="ic ic-15"><use href="#lock"/></svg></button>
      <button class="ms-2 ps-1 me-2" aria-label="Absolute mode"><svg class="ic ic-15"><use href="#absrel"/></svg></button>
      <label for="cx" class="me-1">X:</label><input id="cx" class="coord me-3" value="-73.879" disabled>
      <label for="cy" class="me-1">Y:</label><input id="cy" class="coord me-3" value="-506.785" disabled>
      <label for="cz" class="me-1">Z:</label><input id="cz" class="coord me-2" value="0.0" disabled>
      <span class="ps-1">Grid = 10.0</span>
    </div>
    <div class="tagrow d-flex align-items-center"><i class="vs"></i><button class="tagbtn lit-bg me-1" aria-label="Adaptive degradation"><svg class="ic ic-16"><use href="#cubei"/></svg></button><span>Add Time Tag</span></div>
  </div>
  <div class="play d-flex flex-column pt-2">
    <div class="d-flex align-items-center">
      <button class="pb" aria-label="Start"><svg class="ic ic-14"><use href="#p-start"/></svg></button><i class="vs"></i>
      <button class="pb" aria-label="Previous"><svg class="ic ic-14"><use href="#p-prev"/></svg></button>
      <button class="pb fly" aria-label="Play"><svg class="ic ic-14"><use href="#p-play"/></svg></button>
      <button class="pb" aria-label="Next"><svg class="ic ic-14"><use href="#p-next"/></svg></button><i class="vs"></i>
      <button class="pb" aria-label="End"><svg class="ic ic-14"><use href="#p-end"/></svg></button>
    </div>
    <div class="d-flex align-items-center">
      <button class="pb" aria-label="Key mode"><svg width="12" height="8" fill="#d0d0d0"><path d="M5 0v8L0 4zM7 0v8l5-4z"/></svg></button><i class="vs"></i>
      <span class="position-relative"><input class="frame" value="0" aria-label="Frame"><svg class="position-absolute end-0 top-0 mt-1 me-1" width="5" height="9" fill="#ddd"><path d="M0 3.500h5L2.500 0zM0 5.500h5L2.500 9z"/></svg></span><i class="vs"></i>
      <button class="pb" aria-label="Time configuration"><svg class="ic ic-15"><use href="#clock"/></svg></button>
    </div>
  </div>
  <button class="bigkey flat mt-2" aria-label="Set keys"><svg class="ic ic-28"><use href="#key"/></svg></button>
  <div class="keys d-flex flex-column pt-2 ms-1 me-1"><button class="flat">Auto Key</button><button class="flat">Set Key</button></div>
  <div class="keyset d-flex flex-column pt-2 me-2">
    <select class="pick px-1 w-100" aria-label="Key set"><option>Selected</option></select>
    <div class="d-flex justify-content-between"><button class="pb fly" aria-label="Tangents"><svg class="ic ic-16"><use href="#tang"/></svg></button><button class="flat">Key Filters...</button></div>
  </div>
  <div class="navgrid align-content-start" id="nav"></div>
</footer>

<script>
const icon=(n,s)=>`<svg class="ic${s?' ic-'+s:''}"><use href="#${n}"/></svg>`;
const $=id=>document.getElementById(id);
// main toolbar: "|" thin divider, "||" wide divider, "*" marks a flyout, "!" an active tool
const T='undo redo | link unlink bind | @All selobj! selname rectsel* winsel | move rotate scale* place* @View pivot* | manip kbd! | snap3* asnap psnap ssnap | nset @named | mirror align* || layers stackp || ribb! curve schem || mated* | rset rframe rprod* rcloud gallery'.split(' ');
$('tools').insertAdjacentHTML('beforeend',T.map(t=>{
 if(t==='|')return'<i class="tsep"></i>'; if(t==='||')return'<i class="tsep wide"></i>';
 if(t==='@named')return'<select class="pick named" aria-label="Named selection"><option>Create Selection Se</option></select>';
 if(t[0]==='@')return`<select class="pick" aria-label="${t.slice(1)}"><option>${t.slice(1)}</option></select>`;
 const n=t.replace(/[*!]/,'');
 const g=n==='redo'?'<svg class="ic" viewBox="0 0 24 24"><g transform="matrix(-1 0 0 1 24 0)"><use href="#undo" width="24" height="24"/></g></svg>':icon(n);
 return`<button class="tool${t.includes('*')?' fly':''}${t.includes('!')?' on':''}" aria-label="${n}"><span>${g}</span></button>`}).join(''));

$('tog').innerHTML='geo shape bulb cam helper waves group xref bone boxi snow eye | doc1 doc2 doc3 | funset funnel bag'.split(' ').map((n,i)=>
 n==='|'?'<hr>':`<button class="${i<12?'lit':''}" aria-label="${n}">${icon(n,i<12?16:14)}</button>`).join('');

const R=[['atmosCube_1','geo',0],['mapCloseBuild_closeBuild','shape',1],['mapNoBuild_noBuild','shape',1],['mapNoTree_mapTree','shape',1],['sun_1','bulb',0],['sun_1.Target','bulb',0],['sun2_1','bulb',0],['sun2_1.Target','bulb',0]];
$('rows').innerHTML=R.map(([n,i,s])=>`<tr class="${s?'picked':''}"><td><div class="pair d-flex justify-content-end align-items-center">${icon('eye',13)}${icon(i,14)}</div></td><td>${n}</td><td><svg class="ic ic-12 frz mx-auto"><use href="#snow"/></svg></td></tr>`).join('');

$('ctabs').innerHTML='plus modify hier2 motion disp wrench'.split(' ').map((n,i)=>`<button class="${i?'':'cur'}" aria-label="${n}">${icon(n,17)}</button>`).join('');
$('cats').innerHTML='geo shape bulb cam helper waves gears'.split(' ').map((n,i)=>`<button class="${i?'':'lit'}" aria-label="${n}"><span class="d-flex align-items-center justify-content-center">${icon(n,i?15:20)}</span></button>`).join('');
$('prims').innerHTML='Box Cone Sphere GeoSphere Cylinder Tube Torus Pyramid Teapot Plane TextPlus'.split(' ').map(n=>`<button class="flat">${n}</button>`).join('');
$('nav').innerHTML='zoom1 zoomall zext* zreg* fov* hand* orbit* maxi'.split(' ').map(t=>{const n=t.replace('*','');return`<button class="${t!==n?'fly':''}" aria-label="${n}">${icon(n,15)}</button>`}).join('');

let k='';for(let i=0;i<=100;i++)k+=`<span class="tk${i%5?'':' maj'}">${i%5?'':`<b>${i}</b>`}</span>`;
$('ticks').innerHTML=k;

// construction plane: 14 x 14 cells in perspective, spaced projectively along each edge
const P=(A,B,w,t)=>[0,1].map(j=>((1-t)*A[j]+t*w*B[j])/((1-t)+t*w));
const a=[1033,506.3],b=[1307.8,600.3],c=[1190.6,823],d=[888.2,702.7];let g='';
for(let i=0;i<=14;i++){const t=i/14;g+=`M${P(a,b,.934,t)}L${P(d,c,.935,t)}M${P(a,d,.888,t)}L${P(b,c,.876,t)}`}
$('grid').setAttribute('d',g);
</script>
</body>
</html>
